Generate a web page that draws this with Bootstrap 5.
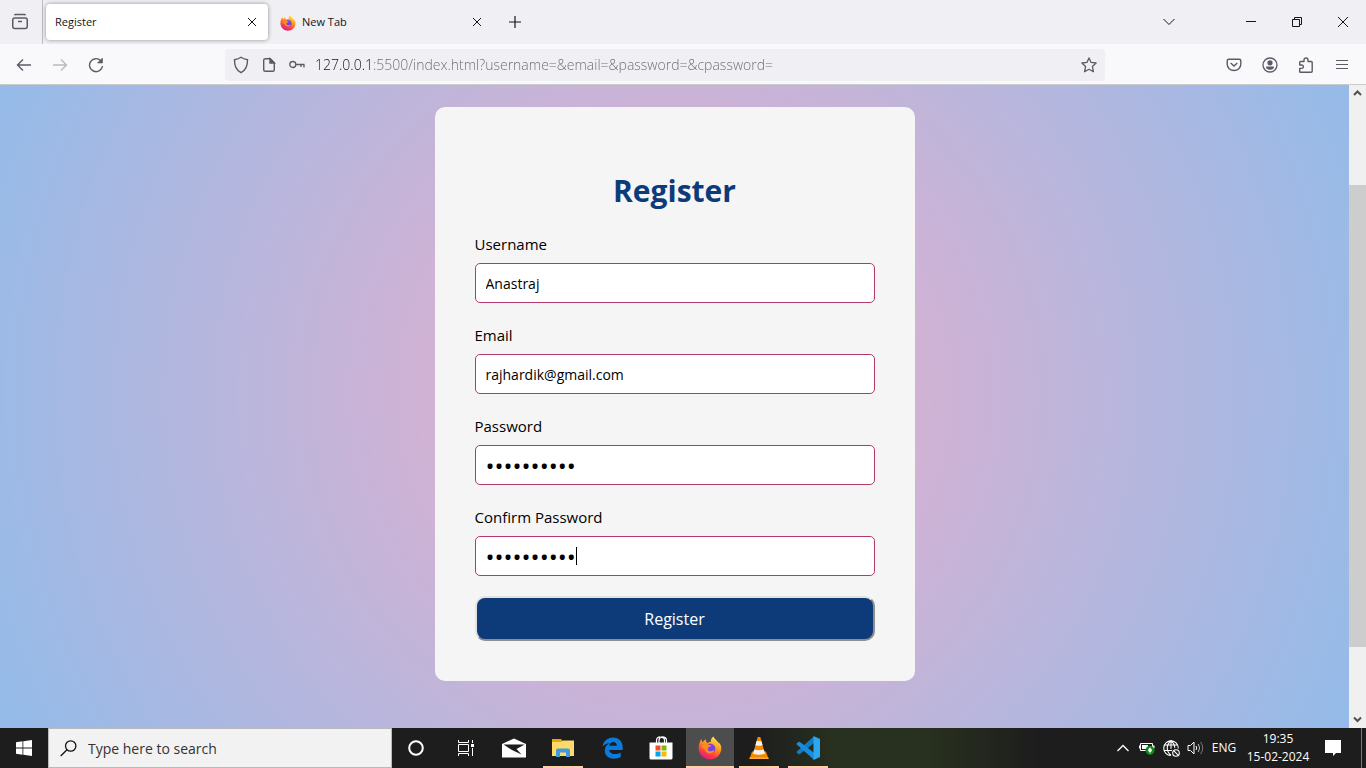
<!DOCTYPE html>
<html lang="en">
<head>
<meta charset="utf-8">
<meta name="viewport" content="width=device-width, initial-scale=1">
<title>Register</title>
<link rel="stylesheet" href="https://cdn.jsdelivr.net/npm/bootstrap@5.3.0/dist/css/bootstrap.min.css">
<style>
  body { font-family: "Open Sans", "Noto Sans", sans-serif; color: #000; }
  button { color: inherit; }
  svg { display: block; flex: none; }
  .plain { background: none; border: 0; padding: 0; display: flex; align-items: center; justify-content: center; }
  .ln { fill: none; stroke: currentColor; }

  .tabstrip { height: 44px; background: #f0eff4; font-size: 11px; color: #15141a; }
  .recent { width: 43px; border-right: 1px solid #bdbcc2; padding-right: 2px; color: #5b5b66; }
  .tab-item { width: 222px; height: 36px; margin-left: 3px; padding: 0 8px 0 9px; border-radius: 4px; }
  .tab-item.current { background: #fff; box-shadow: 0 0 4px rgba(0,0,0,.4); }
  .tab-item a { color: inherit; text-decoration: none; padding-top: 1px; }
  .tab-close { width: 16px; height: 16px; }
  .icon-gap { gap: 6px; }
  .win { width: 46px; height: 44px; }
  .list-tabs { margin-right: 36px; }

  .toolbar { height: 41px; background: #f9f9fb; border-bottom: 1px solid #ccc; padding-top: 1px; color: #5b5b66; }
  .nav-tools { width: 225px; padding-left: 6px; }
  .tool { width: 36px; height: 39px; }
  .faded { opacity: .4; }
  .address { height: 32px; background: #f0eff4; border-radius: 4px; padding: 0 8px; gap: 10px; }
  .address-icons { gap: 12px; }
  .address input { border: 0; outline: 0; padding: 1px 0 0; min-width: 0; font-size: 14px; font-weight: 300; line-height: 20px;
    color: transparent; background: linear-gradient(90deg, #15141a 56px, #6a6972 56px) text; -webkit-background-clip: text; }
  .right-tools { width: 261px; padding-right: 6px; }

  .viewport { min-height: 0; }
  .page { background: radial-gradient(circle 747px at 50% 309px, #eeaeca, #94bbe9); padding-top: 22px; overflow: hidden; }
  .register-box { width: 480px; background: #f5f5f5; border-radius: 10px; padding: 62px 40px 40px; }
  .register-box h1 { font-size: 30px; line-height: 44px; font-weight: 700; color: #0d3b7a; margin: 0 0 18px; }
  .field { margin-bottom: 20px; }
  .field label { font-size: 15px; line-height: 24px; margin-bottom: 7px; display: block; }
  .field:first-of-type { padding-top: 1px; }
  .field input { display: block; width: 100%; height: 40px; border: 1px solid #b03a6c; border-radius: 5px; padding: 0 10px; background: #fff; color: #000; font-size: 14px; outline: 0; }
  .field input[type=password] { font-size: 24px; }
  .caret { left: 101px; top: 11px; width: 1px; height: 18px; background: #000; }
  .submit { width: 100%; height: 45px; border: 2px outset #e3e3e3; border-radius: 10px; background: #0d3b7a; color: #fff; font-size: 16px; }
  .scroller { width: 17px; background: #f0f0f0; color: #505050; }
  .scroller .thumb { background: #cdcdcd; }

  .taskbar { height: 40px; background: linear-gradient(90deg, #1d1d1d 55%, #28301f 61%, #28301f 68%, #1d1d1d 76%); color: #fff; }
  .start { width: 48px; height: 40px; }
  .search { width: 344px; height: 40px; background: #f2f2f2; border: 1px solid #b9b9b9; color: #111; padding-left: 11px; gap: 11px; }
  .search input { border: 0; outline: 0; background: none; font-size: 14px; padding: 0; min-width: 0; }
  .search input::placeholder { color: #333; opacity: 1; }
  .apps { gap: 1px; }
  .app { width: 48px; height: 40px; }
  .app.open { background: linear-gradient(#ffcfaa, #ffcfaa) center bottom / 40px 2px no-repeat; }
  .app.active { background: linear-gradient(#ffcfaa, #ffcfaa) center bottom / 48px 2px no-repeat, #4d4d4d; }
  .tray { width: 24px; height: 40px; }
  .lang { width: 34px; font-size: 12px; }
  .clock { width: 74px; font-size: 12px; line-height: 18px; }
  .notices { width: 36px; height: 40px; }
  .peek { width: 5px; height: 40px; margin-left: 10px; border-left: 1px solid #777; }
</style>
</head>
<body class="vh-100 d-flex flex-column overflow-hidden">

<svg width="0" height="0" class="position-absolute" aria-hidden="true">
  <defs>
    <linearGradient id="flame" x1=".8" y1="0" x2=".3" y2="1"><stop offset="0" stop-color="#fff44f"/><stop offset=".4" stop-color="#ff9a1f"/><stop offset=".75" stop-color="#ff3b47"/><stop offset="1" stop-color="#e31587"/></linearGradient>
    <symbol id="fox" viewBox="0 0 24 24">
      <path fill="url(#flame)" d="M22.600 9c-.5-1.300-1.600-2.700-2.500-3.100.4.700.6 1.500.7 2C19.300 4.400 17 3.600 15.300.6c-2 1.500-2.600 3.700-2.500 5.200-1.300.1-2.500.5-3.500 1.200C8 6.200 7.800 4.200 8 3.200 6.500 4 5.300 5.400 4.600 6.300c-.7-.4-.9-2.300-.8-3.200C2 4.500.7 8.500.7 12.300.7 18.500 5.800 23.500 12 23.500S23.300 18.500 23.300 12.300c0-1.200-.3-2.300-.7-3.300z"/>
      <circle cx="12" cy="12.800" r="5.300" fill="#7542e5"/>
      <path fill="#ff8a16" d="M3.500 11c2-3 4.500-3.300 5.800-4 .3 1.500 1.500 2 4 2.200-.2 1.700-2.600 1.600-3.300 2.800-.8 2 .6 3.600 3 3.200 1.500-.2 2.300-1 3.500-.5-2 4.500-9 3.800-10-1.500C5.800 12.500 4 13 3.500 11z"/>
    </symbol>
  </defs>
</svg>

<header>
  <div class="tabstrip d-flex align-items-center">
    <button class="plain recent h-100" aria-label="Recent browsing"><svg width="18" height="18" viewBox="0 0 18 18" class="ln" stroke-width="1.500"><rect x="1.750" y="5" width="14.500" height="10.500" rx="2"/><path d="M3.500 2.200q.3-.7 1-.7h9q.7 0 1 .7M7 8.500h4"/></svg></button>
    <div class="tab-item current d-flex align-items-center justify-content-between">
      <a href="#">Register</a>
      <button class="plain tab-close" aria-label="Close Register"><svg width="10" height="10" viewBox="0 0 10 10" class="ln"><path d="M1 1l8 8M9 1l-8 8"/></svg></button>
    </div>
    <div class="tab-item d-flex align-items-center justify-content-between">
      <a href="#" class="d-flex align-items-center icon-gap"><svg width="16" height="16"><use href="#fox"/></svg>New Tab</a>
      <button class="plain tab-close" aria-label="Close New Tab"><svg width="10" height="10" viewBox="0 0 10 10" class="ln"><path d="M1 1l8 8M9 1l-8 8"/></svg></button>
    </div>
    <button class="plain tool ms-1" aria-label="Open a new tab"><svg width="12" height="12" viewBox="0 0 12 12" class="ln" stroke-width="1.200"><path d="M6 0v12M0 6h12"/></svg></button>
    <button class="plain win list-tabs ms-auto" aria-label="List all tabs"><svg width="12" height="8" viewBox="0 0 12 8" class="ln"><path d="M.5 1L6 6.500 11.500 1"/></svg></button>
    <div class="d-flex">
      <button class="plain win" aria-label="Minimize"><svg width="10" height="10" viewBox="0 0 10 10" class="ln"><path d="M0 4.500h10"/></svg></button>
      <button class="plain win" aria-label="Restore"><svg width="10" height="10" viewBox="0 0 10 10" class="ln"><path d="M.5 2.500h7v7h-7zM2.500 2V.5h7v7H8"/></svg></button>
      <button class="plain win" aria-label="Close window"><svg width="10" height="10" viewBox="0 0 10 10" class="ln"><path d="M0 0l10 10M10 0L0 10"/></svg></button>
    </div>
  </div>

  <div class="toolbar d-flex align-items-center">
    <div class="nav-tools d-flex">
      <button class="plain tool" aria-label="Back"><svg width="16" height="16" viewBox="0 0 16 16" class="ln" stroke-width="1.400"><path d="M15 8H1.500M7 2.500L1.500 8 7 13.500"/></svg></button>
      <button class="plain tool faded" aria-label="Forward"><svg width="16" height="16" viewBox="0 0 16 16" class="ln" stroke-width="1.400"><path d="M1 8h13.500M9 2.500L14.500 8 9 13.500"/></svg></button>
      <button class="plain tool" aria-label="Reload"><svg width="16" height="16" viewBox="0 0 16 16" class="ln" stroke-width="1.400"><path d="M12.700 3.600A6.500 6.500 0 1 0 14.500 9"/><path d="M14.500 1v5h-5z" fill="currentColor" stroke-width=".6"/></svg></button>
    </div>
    <div class="address flex-fill d-flex align-items-center">
      <div class="address-icons d-flex align-items-center">
        <svg width="16" height="18" viewBox="0 0 16 18" class="ln" stroke-width="1.400"><path d="M8 1.300c2 1.400 4 2 6.500 2.400.2 6-1.500 10.300-6.500 13-5-2.700-6.700-7-6.500-13C4 3.300 6 2.700 8 1.300z"/></svg>
        <svg width="16" height="16" viewBox="0 0 16 16" class="ln" stroke-width="1.400"><path d="M3.700 1.700h5.600l4 4v7.100q0 1.500-1.500 1.500H4.200q-1.500 0-1.500-1.500V3.200q0-1.500 1.500-1.500z"/><path d="M9 1.700v4.300h4.300z" fill="currentColor"/></svg>
        <svg width="16" height="16" viewBox="0 0 16 16" class="ln" stroke-width="1.300"><circle cx="3.800" cy="7.500" r="3"/><path d="M6.800 7.500h8.700M12 7.500v2.500M15 7.500v3"/></svg>
      </div>
      <input class="flex-fill" type="text" aria-label="Address" value="127.0.0.1:5500/index.html?username=&amp;email=&amp;password=&amp;cpassword=">
      <button class="plain" aria-label="Bookmark this page"><svg width="16" height="16" viewBox="0 0 16 16" class="ln" stroke-width="1.300" stroke-linejoin="round"><path d="M8 .9l2.100 4.500 5 .6-3.700 3.400 1 5.300L8 12.300l-4.400 2.400 1-5.300L.9 6l5-.6z"/></svg></button>
    </div>
    <div class="right-tools d-flex justify-content-end">
      <button class="plain tool" aria-label="Save to Pocket"><svg width="16" height="16" viewBox="0 0 16 16" class="ln" stroke-width="1.400"><path d="M2.700 2.200h10.600q1.500 0 1.500 1.500v3.500a6.800 6.300 0 0 1-13.600 0V3.700q0-1.500 1.500-1.500zM4.700 6L8 9l3.300-3"/></svg></button>
      <button class="plain tool" aria-label="Account"><svg width="16" height="16" viewBox="0 0 16 16" class="ln" stroke-width="1.300"><circle cx="8" cy="8" r="7"/><g fill="currentColor" stroke="none"><circle cx="8" cy="5.800" r="2.600"/><path d="M4 9.500h8q0 3.200-4 3.200t-4-3.200z"/></g></svg></button>
      <button class="plain tool" aria-label="Extensions"><svg width="16" height="16" viewBox="0 0 16 16" class="ln" stroke-width="1.400" stroke-linejoin="round"><path d="M6 4.500V3a2 2 0 0 1 4 0v1.500h3.200q1 0 1 1v8.700q0 1-1 1H2.500q-.8 0-.8-.8v-3h2a1.600 1.600 0 0 0 0-3.400h-2V5.300q0-.8.8-.8z"/></svg></button>
      <button class="plain tool" aria-label="Application menu"><svg width="14" height="14" viewBox="0 0 14 14" class="ln" stroke-width="1.200"><path d="M1 2.500h12M1 6.500h12M1 10.500h12"/></svg></button>
    </div>
  </div>
</header>

<div class="viewport flex-fill d-flex">
  <main class="page flex-fill d-flex justify-content-center align-items-start">
    <form class="register-box">
      <h1 class="text-center">Register</h1>
      <div class="field"><label for="username">Username</label><input id="username" type="text" value="Anastraj"></div>
      <div class="field"><label for="email">Email</label><input id="email" type="email" value="rajhardik@gmail.com"></div>
      <div class="field"><label for="password">Password</label><input id="password" type="password" value="abcdefghij"></div>
      <div class="field"><label for="cpassword">Confirm Password</label>
        <div class="position-relative"><input id="cpassword" type="password" value="abcdefghij"><span class="caret position-absolute"></span></div></div>
      <button type="button" class="submit">Register</button>
    </form>
  </main>
  <div class="scroller d-flex flex-column align-items-center" aria-hidden="true">
    <svg width="17" height="16" viewBox="0 0 17 16" class="ln" stroke-width="2"><path d="M5 10l3.500-3.500L12 10"/></svg>
    <div class="w-100 d-flex flex-column flex-fill">
      <div style="flex: 84"></div><div class="thumb" style="flex: 462"></div><div style="flex: 64"></div>
    </div>
    <svg width="17" height="17" viewBox="0 0 17 17" class="ln" stroke-width="2"><path d="M5 6.500l3.500 3.500L12 6.500"/></svg>
  </div>
</div>

<footer class="taskbar d-flex align-items-center">
  <button class="plain start" aria-label="Start"><svg width="16" height="16" viewBox="0 0 16 16" fill="#fff"><path d="M0 2.200l6.500-.9v6.300H0zM7.300 1.200L16 0v7.600H7.300zM0 8.400h6.500v6.300L0 13.800zM7.300 8.400H16V16l-8.700-1.200z"/></svg></button>
  <div class="search d-flex align-items-center">
    <svg width="17" height="17" viewBox="0 0 17 17" class="ln" stroke-width="1.300"><circle cx="10.700" cy="6" r="5.200"/><path d="M7 9.700L.7 16"/></svg>
    <input class="flex-fill" type="text" aria-label="Search" placeholder="Type here to search">
  </div>
  <div class="apps d-flex">
    <button class="plain app" aria-label="Cortana"><svg width="16" height="16" viewBox="0 0 16 16" class="ln" stroke-width="2"><circle cx="8" cy="8" r="6.800"/></svg></button>
    <button class="plain app" aria-label="Task view"><svg width="17" height="16" viewBox="0 0 17 16" class="ln"><path d="M1.500 0v2.500h10V0M1.500 4.500h10v7h-10zM1.500 16v-2.500h10V16M15.500 0v3M15.500 8v8"/><path d="M14 4h3v3h-3z" fill="#fff" stroke="none"/></svg></button>
    <button class="plain app" aria-label="Mail"><svg width="24" height="20" viewBox="0 0 24 20"><path fill="#fff" d="M0 6l12-5.500L24 6v13.500H0z"/><path fill="#1d1d1d" d="M1.500 6.500h21L14.500 11l5 5.500L10 12z"/></svg></button>
    <button class="plain app open" aria-label="File Explorer"><svg width="22" height="20" viewBox="0 0 22 20"><path fill="#e8a50c" d="M0 1h9l1.500 2H22v5H0z"/><path fill="#ffd969" d="M0 4h9l2-1.500h11V18H0z"/><path fill="#3f9bdc" d="M4 19v-6.500q0-2 2-2h10q2 0 2 2V19h-4v-4.500H8V19z"/></svg></button>
    <button class="plain app" aria-label="Edge"><svg width="21" height="22" viewBox="0 0 21 22"><path fill="#0a7bdd" d="M.5 9.500C1.500 4 5.500.5 11 .5c6 0 9.700 4.300 9.700 10v2.400H7.200c.4 4.200 6.800 5.500 11.500 2.600v4.600C12 23.500 2.800 21.700 2.800 13.500c0-3.500 2-6 4.800-7.300C4.500 6.400 2 7.600.5 9.500zm6.800-.7h7.500C14.800 3.500 7.800 4 7.300 8.800z"/></svg></button>
    <button class="plain app" aria-label="Store"><svg width="24" height="24" viewBox="0 0 24 24"><path class="ln" stroke="#fff" stroke-width="1.200" d="M7.500 7V4.500q0-3.500 4-3.700M10 7V4.500q0-3 2.700-3T15.500 4v3M12 1q5.500-.5 5.500 3.500V7"/><path fill="#fff" d="M.5 6.500h23v15.500q0 1.500-1.500 1.500H2q-1.500 0-1.500-1.500z"/><path fill="#f25022" d="M6.500 9.500h5v5h-5z"/><path fill="#7fba00" d="M12.500 9.500h5v5h-5z"/><path fill="#00a4ef" d="M6.500 15.500h5v5h-5z"/><path fill="#ffb900" d="M12.500 15.500h5v5h-5z"/></svg></button>
    <button class="plain app active" aria-label="Firefox"><svg width="24" height="24"><use href="#fox"/></svg></button>
    <button class="plain app open" aria-label="VLC"><svg width="20" height="24" viewBox="0 0 20 24"><path fill="#f28a00" d="M3 15.500h14l2.500 7.500H.5z"/><path fill="#ffac33" d="M.5 21.500h19V23H.5z"/><path fill="#f28a00" d="M8.700 1h2.600l4.700 17q-6 2.500-12 0z"/><path fill="#f2f2f2" d="M7.600 5h4.800l1.200 4.200q-3.600 1.300-7.200 0zM5.200 13.500q4.800 1.600 9.600 0l1.200 4.200q-6 2.300-12 0z"/></svg></button>
    <button class="plain app open" aria-label="Visual Studio Code"><svg width="24" height="24" viewBox="0 0 24 24"><path fill="#0f7cc4" d="M.8 15.500L18 .2v7L4 18q-.8.500-1.500 0L.8 16.700q-.5-.6 0-1.200z"/><path fill="#1b8dd8" d="M.8 8.500L18 23.800v-7L4 6q-.8-.5-1.500 0L.8 7.300q-.5.600 0 1.200z"/><path fill="#2ba8f0" d="M17.500 0L24 3v18l-6.500 3z"/></svg></button>
  </div>
  <div class="d-flex align-items-center ms-auto">
    <button class="plain tray" aria-label="Show hidden icons"><svg width="12" height="8" viewBox="0 0 12 8" class="ln" stroke-width="1.300"><path d="M.5 7L6 1.500 11.500 7"/></svg></button>
    <button class="plain tray" aria-label="Battery"><svg width="16" height="14" viewBox="0 0 16 14"><path class="ln" stroke="#fff" d="M1.500 2.500h12v7h-12z"/><path fill="#fff" d="M3 4h6v4H3zM14 4.500h1.500v3H14zM0 4.500h1v3H0z"/><circle cx="11" cy="9.300" r="4.500" fill="#0e8a1b"/><path fill="#fff" d="M11 6.300l2 2.700-1 2h-.6v1.500h-.8V11H10L9 9z"/></svg></button>
    <button class="plain tray" aria-label="Network"><svg width="17" height="17" viewBox="0 0 17 17" class="ln" stroke-width="1.100"><path d="M8 15.500a7.300 7.300 0 1 1 7.300-7M8 .8c-5 4-5 10.500 0 14.700M8 .8c2.500 2 3.700 4.700 3.700 7M1.500 5h13M1 10.500h8M8 .8v8"/><circle cx="13" cy="13" r="3.300"/><path d="M10.700 10.700l4.600 4.600"/></svg></button>
    <button class="plain tray" aria-label="Volume"><svg width="17" height="14" viewBox="0 0 17 14" class="ln"><path d="M1 4.500h2.500L7 1v12L3.500 9.500H1zM9 5q1.500 2 0 4"/><path d="M11.200 3q3 4 0 8" stroke="#bbb"/><path d="M13.500 1q4.500 6 0 12" stroke="#777"/></svg></button>
    <button class="plain lang">ENG</button>
    <div class="clock text-center">19:35<br>15-02-2024</div>
    <button class="plain notices" aria-label="Notifications"><svg width="16" height="16" viewBox="0 0 16 16"><path fill="#fff" d="M0 0h16v13h-5l-3 3v-3H0z"/><path class="ln" stroke="#1d1d1d" d="M3 3.500h10M3 6.500h10M3 9.500h6"/></svg></button>
    <div class="peek"></div>
  </div>
</footer>
<script src="https://cdn.jsdelivr.net/npm/bootstrap@5.3.0/dist/js/bootstrap.bundle.min.js"></script>
</body>
</html>
